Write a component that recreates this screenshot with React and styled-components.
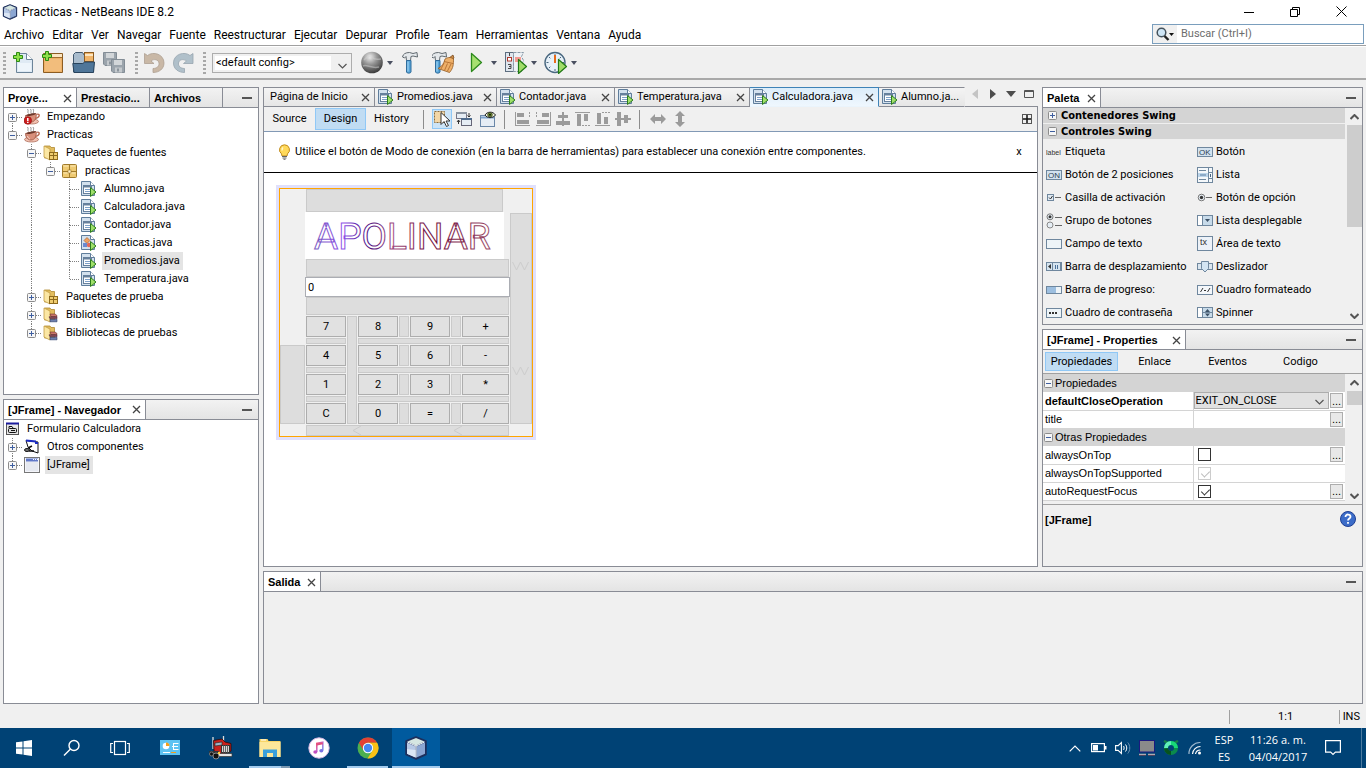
import React from "react";
import styled, { createGlobalStyle, css } from "styled-components";

const ui = `Roboto, "Open Sans", sans-serif`;
const uiBold = `"DejaVu Sans Condensed", "DejaVu Sans", sans-serif`;
const segoe = `"Open Sans", "Noto Sans", sans-serif`;
const arial = `"Liberation Sans", Arial, sans-serif`;
const line = "#898c95";

const GlobalStyle = createGlobalStyle`
  * { box-sizing: border-box; }
  body { margin: 0; background: #f0f0f0; color: #000; font: 11px/14px ${ui}; }
  button, input, select { font: inherit; color: inherit; margin: 0; padding: 0; }
  button { background: none; border: 0; display: inline-flex; align-items: center; justify-content: center; }
  ul { list-style: none; margin: 0; padding: 0; }
  svg { display: block; flex: none; }
`;

/* ---------- page frame ---------- */
const Page = styled.div`
  min-height: 100vh;
  display: flex;
  flex-direction: column;
`;
const TitleBar = styled.header`
  height: 23px;
  background: #fff;
  display: flex;
  align-items: center;
  gap: 4px;
  padding: 0 2px;
  font: 12px/16px ${ui};
`;
const Title = styled.h1`
  font: inherit;
  margin: 0;
  flex: 1;
`;
const WindowButtons = styled.div`
  display: flex;
`;
const WindowButton = styled.button`
  width: 46px;
  height: 20px;
`;
const MenuBar = styled.nav`
  height: 23px;
  background: #fff;
  border-bottom: 1px solid #a0a0a0;
  display: flex;
  align-items: center;
  justify-content: space-between;
  padding: 0 2px 0 4px;
`;
const MenuList = styled.ul`
  display: flex;
  gap: 8px;
  padding-top: 2px;
  font: 12px/16px ${ui};
`;
const MenuItem = styled.button`
  white-space: nowrap;
`;
const SearchBox = styled.label`
  width: 212px;
  height: 20px;
  display: flex;
  align-items: center;
  border: 1px solid #7a9ebd;
  background: #fff;
`;
const SearchGlyph = styled.span`
  width: 24px;
  height: 18px;
  padding: 2px 3px;
  background: #f0f0f0;
`;
const SearchInput = styled.input`
  flex: 1;
  min-width: 0;
  border: 0;
  outline: 0;
  padding: 0 4px;
  background: none;
  &::placeholder { color: #6d6d6d; opacity: 1; }
`;
const ToolBar = styled.div`
  height: 34px;
  border-top: 1px solid #fff;
  border-bottom: 2px solid #a9a9a9;
  display: flex;
  align-items: center;
  padding-left: 3px;
`;
const Grip = styled.i`
  width: 3px;
  height: 22px;
  margin: 0 6px 0 ${(p) => (p.$first ? 0 : 9)}px;
  background: repeating-linear-gradient(#a8a8a8 0 2px, transparent 2px 4px);
`;
const ToolGroup = styled.div`
  display: flex;
  align-items: center;
  gap: ${(p) => p.$gap || 6}px;
`;
const SplitButton = styled.div`
  display: flex;
`;
const ToolButton = styled.button`
  width: ${(p) => p.$w || 24}px;
  height: 26px;
`;
const SplitArrow = styled.button`
  width: 12px;
  height: 26px;
`;
const SelectWrap = styled.span`
  position: relative;
  display: block;
  width: ${(p) => p.$w || "100%"};
  height: ${(p) => p.$h}px;
  margin-right: ${(p) => p.$mr || 0}px;
  & > svg { position: absolute; right: 5px; bottom: 4px; pointer-events: none; }
`;
const Select = styled.select`
  appearance: none;
  display: block;
  width: 100%;
  height: 100%;
  padding-left: ${(p) => (p.$flat ? 1 : 3)}px;
  border: 1px solid #adadad;
  border-radius: 0;
  font-family: ${ui};
  background: ${(p) => (p.$flat ? "#e1e1e1" : "linear-gradient(90deg, #fff, #fff) 2px 2px / calc(100% - 22px) calc(100% - 4px) no-repeat #f0f0f0")};
`;

/* ---------- docked panels ---------- */
const Workspace = styled.main`
  flex: 1;
  display: flex;
  gap: 4px;
  padding: 7px 3px 0;
`;
const Column = styled.div`
  display: flex;
  flex-direction: column;
  gap: 4px;
  ${(p) => (p.$w ? css`width: ${p.$w}px; flex: none;` : css`flex: 1; min-width: 0;`)}
`;
const Row = styled.div`
  display: flex;
  gap: 4px;
  flex: 1;
`;
const Panel = styled.section`
  flex: ${(p) => p.$flex || "1 1 0"};
  display: flex;
  flex-direction: column;
  min-height: 0;
  border: 1px solid ${line};
  background: ${(p) => (p.$white ? "#fff" : "#f0f0f0")};
`;
const PanelHead = styled.div`
  height: 20px;
  display: flex;
  border-bottom: 1px solid ${line};
  background: linear-gradient(#f2f2f2, #e4e4e4);
`;
const PanelTab = styled.button`
  width: ${(p) => p.$w}px;
  height: 19px;
  padding: 1px 4px 0;
  justify-content: space-between;
  white-space: nowrap;
  border-right: 1px solid ${line};
  font: bold 11px/14px ${arial};
  background: ${(p) => (p.$active ? "#fff" : "none")};
`;
const PanelMin = styled.button`
  margin-left: auto;
  width: 22px;
  height: 19px;
  padding-top: 1px;
`;

/* ---------- tree ---------- */
const Tree = styled.ul`
  flex: 1;
`;
const TreeRow = styled.li`
  height: 18px;
  display: flex;
  align-items: center;
  & > svg:last-of-type { margin: 0 5px 0 ${(p) => (p.$root ? 2 : 1)}px; }
`;
const TreeText = styled.span`
  line-height: 18px;
  padding: 0 3px 0 2px;
  white-space: nowrap;
  background: ${(p) => (p.$on ? "#e4e4e4" : "none")};
`;

/* ---------- editor ---------- */
const Editor = styled.section`
  flex: 1;
  min-width: 0;
  display: flex;
  flex-direction: column;
`;
const EditorTabs = styled.div`
  height: 20px;
  display: flex;
`;
const EditorTab = styled.button`
  width: ${(p) => p.$w}px;
  height: 20px;
  flex: none;
  justify-content: flex-start;
  gap: 3px;
  padding: 0 4px 0 ${(p) => (p.$plain ? 6 : 3)}px;
  white-space: nowrap;
  border: 1px solid ${line};
  border-width: 1px 1px 1px 0;
  background: linear-gradient(#f4f4f4, #e6e6e6);
  &:first-child { border-left-width: 1px; }
  &:last-of-type { border-right-color: transparent; }
  ${(p) => p.$active && css`
    border-color: #3f83b7 #3f83b7 #eaf4fc;
    background: linear-gradient(#dcedfa, #eff7fe);
  `}
  & > svg:last-child:not(:first-child) { margin-left: auto; }
`;
const TabTools = styled.div`
  flex: 1;
  display: flex;
  align-items: flex-start;
  justify-content: flex-end;
  border-bottom: 1px solid ${line};
`;
const TabTool = styled.button`
  width: 18px;
  height: 14px;
`;
const EditorBody = styled.div`
  flex: 1;
  display: flex;
  flex-direction: column;
  border: 1px solid ${line};
  border-top: 0;
  background: #fff;
`;
const EditorBar = styled.div`
  height: 25px;
  display: flex;
  align-items: center;
  border-bottom: 1px solid #8299b5;
  background: #f0f0f0;
`;
const ViewButton = styled.button`
  width: 51px;
  height: 22px;
  ${(p) => p.$active && css`
    background: #c0dcf3;
    border: 1px solid #90c8f6;
  `}
`;
const Divider = styled.i`
  width: 1px;
  height: 19px;
  background: #8c8c8c;
  margin: 0 8px 0 6px;
`;
const BarButton = styled.button`
  width: 20px;
  height: 20px;
  margin-right: ${(p) => p.$mr || 0}px;
  ${(p) => p.$end && css`margin-left: auto;`}
  ${(p) => p.$active && css`
    background: #cce4f7;
    border: 1px solid #90c8f6;
  `}
`;
const Hint = styled.div`
  height: 41px;
  display: flex;
  align-items: center;
  gap: 4px;
  padding: 0 12px 0 14px;
  border-bottom: 1px solid #000;
`;
const HintText = styled.p`
  margin: 0;
  flex: 1;
`;
const HintClose = styled.button`
  width: 12px;
`;
const Canvas = styled.div`
  flex: 1;
  padding: 12px;
`;

/* ---------- calculator form ---------- */
const FormShadow = styled.div`
  width: 260px;
  padding: 3px;
  background: #e0e0fc;
`;
const FormFrame = styled.form`
  display: flex;
  border: 1px solid #ffa500;
  background: #f0f0f0;
`;
const FormSide = styled.div`
  width: ${(p) => p.$w}px;
  padding: ${(p) => p.$top}px 0 12px;
  display: flex;
`;
const Spacer = styled.div`
  flex: ${(p) => (p.$h ? "none" : 1)};
  height: ${(p) => (p.$h ? p.$h + "px" : "auto")};
  margin: ${(p) => p.$m || 0};
  grid-area: ${(p) => p.$area || "auto"};
  border: 1px solid #cacaca;
  background: #dddddd;
  display: flex;
  flex-direction: ${(p) => (p.$col ? "column" : "row")};
  align-items: center;
  justify-content: space-around;
`;
const FormCenter = styled.div`
  flex: 1;
`;
const Banner = styled.div`
  width: 199px;
  height: 47px;
  background: #fff;
`;
const Display = styled.input`
  display: block;
  width: 100%;
  height: 20px;
  padding: 0 2px;
  border: 1px solid #abadb3;
  border-radius: 0;
  background: #fff;
`;
const Keys = styled.div`
  display: grid;
  grid-template-columns: 40px 10px 40px 10px 40px 10px 47px;
  grid-template-rows: 21px 6px 21px 6px 21px 6px 21px;
  gap: 1px;
  margin: 1px;
`;
const Key = styled.button`
  grid-area: ${(p) => p.$area};
  border: 1px solid #adadad;
  background: #e1e1e1;
`;

/* ---------- palette ---------- */
const Scroller = styled.div`
  flex: 1;
  display: flex;
  min-height: 0;
`;
const ScrollContent = styled.div`
  flex: 1;
  min-width: 0;
`;
const ScrollBar = styled.div`
  width: 16px;
  display: flex;
  flex-direction: column;
  align-items: center;
  margin-left: 1px;
`;
const ScrollButton = styled.button`
  width: 16px;
  height: 17px;
`;
const ScrollTrack = styled.div`
  flex: 1;
  width: 15px;
`;
const ScrollThumb = styled.div`
  height: ${(p) => p.$h};
  background: #cdcdcd;
`;
const PaletteHead = styled.button`
  width: 100%;
  height: 16px;
  justify-content: flex-start;
  gap: 4px;
  padding-left: 5px;
  font: bold 11px/14px ${uiBold};
  background: #d4d4d4;
  border-bottom: 1px solid #efefef;
`;
const PaletteGrid = styled.ul`
  display: grid;
  grid-template-columns: 1fr 1fr;
  grid-auto-rows: 23px;
`;
const PaletteItem = styled.li`
  display: flex;
  align-items: center;
  gap: 3px;
  padding-left: 3px;
  white-space: nowrap;
`;

/* ---------- properties ---------- */
const PropTabs = styled.div`
  display: flex;
  padding: 2px;
  height: 24px;
  border-bottom: 1px solid #a0a0a0;
`;
const PropTab = styled.button`
  flex: 0 1 73px;
  height: 19px;
  ${(p) => p.$active && css`
    background: #c0dcf3;
    border: 1px solid #90c8f6;
  `}
`;
const PropTable = styled.table`
  width: 100%;
  table-layout: fixed;
  border-collapse: collapse;
  background: #fff;
  font: 11px/14px ${arial};
  & td, & th { height: 18px; padding: 0 2px; border-bottom: 1px solid #d4d4d4; text-align: left; }
  & th { font-weight: normal; border-right: 1px solid #d4d4d4; white-space: nowrap; }
  & td + td { padding: 0 1px; }
`;
const NameCol = styled.col`
  width: 150px;
`;
const MoreCol = styled.col`
  width: 16px;
`;
const CategoryRow = styled.tr`
  background: #d4d4d4;
  & > th { border: 0; padding: 0 1px; }
`;
const CategoryLabel = styled.span`
  display: flex;
  align-items: center;
  gap: 2px;
`;
const PropValue = styled.td`
  ${(p) => p.$flush && css`&&& { padding: 0; }`}
`;
const More = styled.button`
  width: 13px;
  height: 15px;
  display: flex;
  border: 1px solid #adadad;
  background: #e8e8e8;
`;
const Check = styled.input`
  appearance: none;
  display: block;
  position: relative;
  width: 13px;
  height: 13px;
  margin-left: 2px;
  border: 1px solid #333;
  background: #fff;
  &:checked::after {
    content: "";
    position: absolute;
    left: 4px;
    top: 1px;
    width: 4px;
    height: 7px;
    border: solid #333;
    border-width: 0 1px 1px 0;
    transform: rotate(45deg);
  }
  &:disabled { border-color: #ccc; }
  &:disabled::after { border-color: #bbb; }
`;
const Description = styled.div`
  height: 62px;
  display: flex;
  justify-content: space-between;
  padding: 6px 6px 0 2px;
  border-top: 1px solid #a0a0a0;
  font: bold 11px/18px ${arial};
`;
const HelpButton = styled.button`
  width: 16px;
  height: 16px;
`;

/* ---------- status and task bars ---------- */
const StatusBar = styled.footer`
  height: 24px;
  display: flex;
  align-items: center;
  justify-content: flex-end;
  padding: 2px 6px 0 0;
`;
const StatusCell = styled.span`
  width: ${(p) => (p.$w ? p.$w + "px" : "auto")};
  text-align: center;
  border-left: 1px solid #a0a0a0;
  padding-left: 3px;
`;
const TaskBar = styled.footer`
  height: 40px;
  background: #004275;
  color: #fff;
  display: flex;
  justify-content: space-between;
  font: 11px/17px ${segoe};
`;
const TaskGroup = styled.div`
  display: flex;
`;
const TaskButton = styled.button`
  position: relative;
  width: ${(p) => p.$w}px;
  height: 40px;
  background: ${(p) => (p.$active ? "#005a9e" : "none")};
  &::after {
    content: "";
    display: ${(p) => (p.$mark ? "block" : "none")};
    position: absolute;
    left: ${(p) => (p.$active ? 0 : 4)}px;
    right: ${(p) => (p.$active ? 0 : 4)}px;
    bottom: 0;
    height: 2px;
    background: ${(p) => (p.$mark === "many" ? "linear-gradient(90deg, #a3cbee 78%, #7b98b1 78%)" : "#a3cbee")};
  }
`;
const TrayButton = styled.button`
  width: ${(p) => p.$w || 24}px;
  height: 40px;
`;
const TrayText = styled.div`
  width: ${(p) => p.$w}px;
  padding-top: 3px;
  text-align: center;
`;
const ShowDesktop = styled.i`
  width: 5px;
  margin-left: 10px;
  border-left: 1px solid #4c7ba0;
`;

/* ---------- icons ---------- */
const Svg = ({ w = 16, h = 16, children, ...rest }) => (
  <svg width={w} height={h} viewBox={`0 0 ${w} ${h}`} fill="none" aria-hidden="true" {...rest}>{children}</svg>
);
const Close = () => <Svg w={9} h={9}><path d="M1 1l7 7M8 1L1 8" stroke="#444" strokeWidth="1.300" /></Svg>;
const Minus = () => <Svg w={10} h={2}><path d="M0 1h10" stroke="#555" strokeWidth="2" /></Svg>;
const Caret = () => <Svg w={6} h={4}><path d="M0 0h6L3 4z" fill="#4a5060" /></Svg>;
const Chevron = ({ up, c = "#555", s = 1.2 }) => (
  <Svg w={9} h={6}><path d={up ? "M.5 5l4-4 4 4" : "M.5 1l4 4 4-4"} stroke={c} strokeWidth={s} /></Svg>
);
const Cube = ({ s = 16 }) => (
  <svg width={s} height={s} viewBox="0 0 24 24" aria-hidden="true">
    <path d="M12 1l10 4v13.500L12 23 2 18.500V5z" fill="#1d2f5c" stroke="#1d2f5c" strokeWidth="1.500" strokeLinejoin="round" />
    <path d="M12 2l8.500 3.500L12 9.500 3.500 5.500z" fill="#d5e6e2" />
    <path d="M3 6.500l8.500 4v11L3 17.800z" fill="#b5c8e6" />
    <path d="M21 6.500l-8.500 4v11l8.500-3.700z" fill="#8ba6d2" />
    <path d="M3 13l8.500 1v7.500L3 17.800z" fill="#dbe6f5" />
    <path d="M12 9.500v12M3.500 6l8.500 4 8.500-4" stroke="#f2f8fb" fill="none" />
  </svg>
);
const Box = ({ x = 0, y = 0, plus }) => (
  <g>
    <rect x={x + 0.5} y={y + 0.5} width="8" height="8" rx="1" fill="#f6f6f6" stroke="#8c8c8c" />
    <path d={`M${x + 2} ${y + 4.5}h5`} stroke="#3f5fa0" />
    {plus && <path d={`M${x + 4.5} ${y + 2}v5`} stroke="#3f5fa0" />}
  </g>
);
const Expander = ({ plus }) => <Svg w={9} h={9}><Box plus={plus} /></Svg>;

/* dotted connector lines of one 19px wide tree level */
const Guide = ({ kind }) => {
  const up = kind === "line" || kind === "tee" || kind === "end" || kind.includes("u");
  const down = kind === "line" || kind === "tee" || (kind.includes("d") && kind !== "end");
  const open = kind.includes("+") || kind.includes("-");
  const arm = open || kind === "tee" || kind === "end";
  const shown = kind !== "blank";
  return (
    <Svg w={19} h={18}>
      {shown && up && <path d="M8.500 0v9" stroke="#808080" strokeDasharray="1 1" />}
      {shown && down && <path d="M8.500 9v9" stroke="#808080" strokeDasharray="1 1" />}
      {arm && <path d="M9 9.500h10" stroke="#808080" strokeDasharray="1 1" />}
      {open && <Box x={4} y={5} plus={kind.includes("+")} />}
    </Svg>
  );
};

const Cup = ({ bad }) => (
  <Svg>
    <path d="M4.500 4.500C3 3 5 2 3.500 0M7.500 4.500C6 3 8 2 6.500 0M10 4.500C8.500 3 10.500 2 9 0" stroke="#777" strokeWidth=".8" />
    <ellipse cx="7.500" cy="12.500" rx="7" ry="2.500" fill="#f0c0b0" stroke="#a5604e" strokeWidth=".7" />
    <path d="M1.500 6.500L12 4.500c1 4-1 8.500-5 8.500-3.500 0-5.500-3-5.500-6.500z" fill="#d88f7a" stroke="#9c5543" strokeWidth=".8" />
    <path d="M1.800 6.600C3 5 10 3.500 11.900 4.600c-1 1.900-7.900 3.200-10.100 2z" fill="#6e3a2c" />
    <path d="M12.300 5.500c4-1.500 4.200 2.500-1 4.200" stroke="#b86a55" strokeWidth="1.300" />
    <path d="M3.500 9c.3 1.500 1.300 2.500 2.500 3" stroke="#f7d8cc" />
    {bad && <g><circle cx="3.800" cy="11.500" r="3.800" fill="#cc1f1f" stroke="#8e0e0e" strokeWidth=".6" /><path d="M3.800 9v3M3.800 12.800V14" stroke="#fff" strokeWidth="1.500" /></g>}
  </Svg>
);
const Folder = ({ kind }) => (
  <Svg>
    <path d="M1.500 1H7l1 1.500h3.500V13h-10z" fill="#e2bd5e" stroke="#b08a33" strokeWidth=".8" />
    <path d="M1 1l6 3v11l-6-3z" fill="#fbe7a4" stroke="#c39d45" strokeWidth=".8" />
    {kind === "pkg"
      ? <g><rect x="6.500" y="7.500" width="8" height="7" fill="#f0cd70" stroke="#8e6a1d" /><path d="M6.500 10.500h8M10.500 7.500v7" stroke="#8e6a1d" /></g>
      : <g><path d="M7 7h5l2 1.500v1H8z" fill="#c9766c" stroke="#6d2f2a" strokeWidth=".6" /><path d="M6 9.800h8v2H7z" fill="#8b4c5c" stroke="#54283a" strokeWidth=".6" /><path d="M7 12.300h7v2.500H7z" fill="#6d7fae" stroke="#2c3d66" strokeWidth=".6" /></g>}
  </Svg>
);
const Pkg = () => (
  <Svg>
    <rect x=".5" y="1.500" width="14" height="13" rx="1" fill="#efca72" stroke="#a07b2c" />
    <path d="M.5 8.500h14M7.500 1.500v13" stroke="#a07b2c" /><path d="M1.500 3h5M8.500 3h5M1.500 10h5M8.500 10h5" stroke="#fbe9b8" />
    <rect x="6" y="7" width="3" height="3" fill="#fff2cb" stroke="#a07b2c" strokeWidth=".6" />
  </Svg>
);
const JavaFile = ({ cls }) => (
  <Svg>
    <path d="M.5.500h9l4 4v10H.5z" fill="#d3e1ee" stroke="#5f7d9b" />
    <path d="M9.500.500v4h4" fill="#fff" stroke="#5f7d9b" />
    {cls
      ? <g><path d="M6 2.500l3 3-3 3-3-3z" fill="#f0a060" stroke="#a05018" strokeWidth=".6" /><rect x="2" y="8" width="4" height="4" fill="#6a8ad0" /><circle cx="8" cy="10" r="2.200" fill="#e36a5a" /></g>
      : <g><rect x="2.500" y="4.500" width="8" height="8" fill="#fff" stroke="#66809c" /><path d="M3 5.500h7" stroke="#66809c" strokeWidth="2" /><path d="M4 8.500h5M4 10.500h5" stroke="#7da0c8" /></g>}
    <path d="M9.500 6.500l5.500 4.500-5.500 4.500z" fill="#9fe06a" stroke="#2c7d1c" />
  </Svg>
);
const FormIcon = () => (
  <Svg w={14} h={14}><rect x=".5" y="1.500" width="12" height="11" fill="#e8e8e8" stroke="#555" /><path d="M0 1.500h13" stroke="#1b1b9c" strokeWidth="2" /><path d="M3 6V4.500h3L7 6M2 8.500h9" stroke="#111" /><rect x="2.500" y="6.500" width="8" height="4" rx="1" fill="#ddd" stroke="#111" /><path d="M5 8.500h4" stroke="#111" /></Svg>
);
const OtherIcon = () => (
  <Svg><path d="M2 1.500l12 1.500v11L8 12 4 8z" fill="#fff" stroke="#111" /><path d="M2 1.500l10 1" stroke="#1b2bc0" strokeWidth="2" /><path d="M11 4h3" stroke="#1b2bc0" strokeWidth="2" /><ellipse cx="3" cy="11" rx="2.500" ry="1.500" fill="#777" stroke="#111" /><path d="M4 9l4-2M5 12h5" stroke="#111" strokeWidth="1.500" /></Svg>
);
const FrameIcon = () => (
  <Svg><rect x=".5" y=".5" width="15" height="15" fill="#f4f5fa" stroke="#777" /><path d="M2 3h12" stroke="#6078c8" strokeWidth="3" /><path d="M9 2.500h1M11 2.500h1M13 2.500h1" stroke="#fff" /><path d="M2 5h12v9H2z" fill="#e6e9f0" /></Svg>
);
const Plus = () => <path d="M3.500.500h3v3h3v3h-3v3h-3v-3h-3v-3h3z" fill="#8ee04a" stroke="#2c8a12" />;
const NewFile = () => (
  <Svg w={24} h={24}><path d="M4.500 2.500h10l6 6v13h-16z" fill="#dfeaf4" stroke="#6c8499" /><path d="M14.500 2.500v6h6" fill="#fff" stroke="#6c8499" /><path d="M6 12h13v8H6z" fill="#eef5fb" /><g transform="translate(1 1)"><Plus /></g></Svg>
);
const NewProject = () => (
  <Svg w={24} h={24}><path d="M1.500 2.500h19v19h-19z" fill="#eeb267" stroke="#8c5c22" /><path d="M2 3h18v3H2z" fill="#fbe6c2" /><path d="M2 6.500h18" stroke="#a06e30" /><path d="M3 8h16v12H3z" fill="#f2bd7c" /><Plus /></Svg>
);
const OpenProject = () => (
  <Svg w={24} h={24}><path d="M1.500 21V3.500l2-2h7l2 3h9V21z" fill="#a9bccd" stroke="#41586e" /><rect x="12.500" y="1.500" width="9" height="9" fill="#f0b469" stroke="#8c5c22" /><path d="M13 4h8" stroke="#fbe6c2" strokeWidth="2" /><path d="M.8 12.500h10l2-1.500H22.500L21.500 21.500H2z" fill="#4f7699" stroke="#28435c" /></Svg>
);
const Disk = ({ x, y }) => <g transform={`translate(${x} ${y})`}><path d="M.5.500h13v13H2L.5 12z" fill="#9ba4ac" stroke="#838d96" /><path d="M3 1h8v5H3z" fill="#d2d6d9" /><path d="M4 8.500h7v5H4z" fill="#c4c9cd" /><path d="M6 9.500h2v3H6z" fill="#8c959d" /></g>;
const SaveAll = () => <Svg w={24} h={24}><Disk x={1} y={1} /><Disk x={9} y={8} /></Svg>;
const Undo = () => <Svg w={22} h={24}><path d="M.5 2.500l3 2C9 0 20 3 20 12c0 6-5 9.500-11 9.500v-4c4 0 6.500-2.500 6-5.500-.5-3.500-5-4.500-8-2l3 2.500H.5z" fill="#c9b8a6" stroke="#ad9f92" strokeWidth=".8" /></Svg>;
const Redo = () => <Svg w={22} h={24}><path d="M21 2.500l-3 2C12.500 0 1.500 3 1.500 12c0 6 5 9.500 11 9.500v-4c-4 0-6.500-2.500-6-5.500.5-3.500 5-4.500 8-2l-3 2.500H21z" fill="#b0c0ca" stroke="#97a5ae" strokeWidth=".8" /></Svg>;
const Globe = () => (
  <Svg w={24} h={24}><defs><radialGradient id="globe" cx=".4" cy=".25" r=".8"><stop offset="0" stopColor="#eee" /><stop offset=".4" stopColor="#999" /><stop offset="1" stopColor="#333" /></radialGradient></defs><circle cx="12" cy="11.500" r="10.800" fill="url(#globe)" /><path d="M4 9c3-4 7-4 9-2s5 1 8 1M3 15c4-2 8 3 16 1" stroke="#d0d0d0" strokeWidth="1.500" opacity=".5" /></Svg>
);
const HammerShape = () => <g><path d="M2.500 6c.5-3 3-4.500 7-4.500l3.500 1 4-1 .5 4.500-4.500-1-2 .5-.5 4H6.500L6 5.500 4.500 7z" fill="#e4e8eb" stroke="#626a70" /><path d="M6.500 9.500h4.500V21c0 1.500-4.500 1.500-4.500 0z" fill="#56a4d8" stroke="#2f6c9c" /><path d="M8 10.500v10" stroke="#a8d8f5" /></g>;
const Hammer = () => <Svg w={28} h={24}><HammerShape /></Svg>;
const Clean = () => <Svg w={28} h={24}><g transform="translate(-3 0)"><HammerShape /></g><path d="M17 7l4-3 1 3-1 1z" fill="#c98a4a" stroke="#7a4a1c" strokeWidth=".8" /><path d="M13 8c3-2 6-2 8.500 0 0 5 0 9-4 13.500L6 17.500c4-2 6-5 7-9.500z" fill="#eeb069" stroke="#935a22" strokeWidth=".8" /><path d="M12 10.500l9 2M12 12l-3 6M15.500 12.500l-3 7M19 13l-3.500 7" stroke="#a9642a" strokeWidth=".8" /></Svg>;
const Play = () => <Svg w={24} h={24}><path d="M7.500 2.500v18l10-9z" fill="#a6e070" stroke="#2c8a1c" strokeWidth="1.300" strokeLinejoin="round" /></Svg>;
const SmallPlay = () => <path d="M14.500 8.500v14l8-7z" fill="#a0dc68" stroke="#217a16" strokeWidth="1.200" strokeLinejoin="round" />;
const Debug = () => <Svg w={24} h={24}><rect x="1.500" y="1.500" width="8" height="19" fill="#dfe6ee" stroke="#5d6e80" /><path d="M9.500 1.500h10l-2 4 2 4-2 5v6h-8z" fill="#edf1f5" stroke="#8b9aa8" strokeDasharray="3 1" /><rect x="3.500" y="6.500" width="4" height="3.500" fill="#fff" stroke="#b03a2e" /><path d="M5.500 2v3M4 13.500h3v2H5M7 15.500v2H4" stroke="#4a4a4a" /><rect x="11" y="6" width="6" height="5" fill="#f49a92" /><SmallPlay /></Svg>;
const ProfileIcon = () => <Svg w={24} h={24}><circle cx="11" cy="11.500" r="10" fill="#e6f0f8" stroke="#4a6880" strokeWidth="1.400" /><path d="M11 3v2M11 18v2M2.500 11.500h2M18 11.500h2M5 6l1.300 1.300M17 6l-1.300 1.300M5 17l1.300-1.300" stroke="#4a6880" /><path d="M11 4v8" stroke="#e86a1a" strokeWidth="2" /><SmallPlay /></Svg>;
const Magnifier = () => <Svg w={20} h={16}><circle cx="5.500" cy="5.500" r="4.300" fill="#cfe6f6" stroke="#45525c" strokeWidth="1.500" /><path d="M8.500 9l4 4" stroke="#222" strokeWidth="2.400" /><path d="M13 6h5l-2.500 3z" fill="#111" /></Svg>;
const Bulb = () => <Svg w={13} h={16}><path d="M6.500.800a5 5 0 0 1 3 9L9 12H4l-.5-2.200a5 5 0 0 1 3-9z" fill="#ffd95a" stroke="#c08a1c" /><path d="M5 3.500c-1 1-1 2-.8 3" stroke="#fff6cc" strokeWidth="1.400" /><path d="M4 12.500h5M4.500 14h4M5.500 15.300h2" stroke="#666" /></Svg>;
const SelectMode = () => <Svg w={18} h={18}><rect x="1.500" y="1.500" width="10" height="11" fill="#f2d6a6" stroke="#8a6a3a" strokeDasharray="2 1" /><path d="M8 2.500v12l3-3 2.500 5 2-1-2.500-4.500h4z" fill="#fff" stroke="#333" /></Svg>;
const Connect = () => <Svg><rect x=".5" y="1.500" width="10" height="6" fill="#e6edf4" stroke="#778" /><path d="M0 2h11" stroke="#8a93a0" strokeWidth="2" /><rect x="5.500" y="7.500" width="10" height="7" fill="#e6edf4" stroke="#667" /><path d="M5 8h11" stroke="#4f6b8c" strokeWidth="2" /><path d="M2.500 9v4M1 11l1.500-2L4 11M13 6V2M11.500 4.500l1.500 1.500 1.500-1.500" stroke="#333" /></Svg>;
const Preview = () => <Svg><rect x=".5" y="4.500" width="14" height="11" fill="#e6edf5" stroke="#6a87a8" /><path d="M1 6.500h13" stroke="#7ea3cc" strokeWidth="2" /><path d="M5 4c2-3.500 8-4 10.500 0-2.500 3.500-8.500 3.500-10.500 0z" fill="#f0f5d8" stroke="#222" /><circle cx="10" cy="3.800" r="2.300" fill="#7aa02c" stroke="#222" strokeWidth=".7" /><circle cx="10" cy="3.800" r="1" fill="#111" /></Svg>;
const g = "#9b9b9b";
const alignArt = [
  <path key="a" d="M0 1h1v14H0zM2 2h7v4H2zM2 9h12v4H2zM14 1h1v2h-1zM14 4h1v2h-1zM0 14h15v1H0z" fill={g} />,
  <path key="b" d="M15 1h1v14h-1zM7 2h7v4H7zM2 9h12v4H2zM1 1h1v2H1zM1 4h1v2H1zM1 14h15v1H1z" fill={g} />,
  <path key="c" d="M7 1h2v14H7zM3 4h10v3H3zM1 10h14v4H1z" fill={g} />,
  <path key="d" d="M0 1h15v1H0zM2 3h4v12H2zM9 3h4v7H9zM7 14h2v1H7zM10 14h2v1h-2zM13 14h2v1h-2z" fill={g} />,
  <path key="e" d="M0 14h15v1H0zM2 2h4v11H2zM9 6h4v7H9zM7 1h2v1H7zM10 1h2v1h-2zM13 1h2v1h-2z" fill={g} />,
  <path key="f" d="M0 7h16v2H0zM2 1h4v14H2zM9 4h4v8H9z" fill={g} />,
];
const ResizeH = () => <Svg><path d="M0 8l5-5v3h6V3l5 5-5 5v-3H5v3z" fill={g} /></Svg>;
const ResizeV = () => <Svg><path d="M8 0l5 5h-3v6h3l-5 5-5-5h3V5H3z" fill={g} /></Svg>;

const blue = "#6f879e";
const PIcon = ({ k }) => (
  <Svg>
    {k === "label" && <text x="0" y="11" fontSize="7" fontFamily="Liberation Sans, sans-serif" fill="#333">label</text>}
    {(k === "OK" || k === "ON") && <g><rect x=".5" y="3.500" width="15" height="9" fill="#d3e2ef" stroke={blue} /><text x="2" y="11" fontSize="8" fontFamily="Liberation Sans, sans-serif" fill="#2c3f52">{k}</text></g>}
    {k === "list" && <g><rect x=".5" y=".5" width="15" height="15" fill="#f4f8fb" stroke={blue} /><path d="M2 3.500h7M2 12.500h7" stroke={blue} /><path d="M1 6h10v4H1z" fill="#bcd5ea" /><path d="M3 8h6" stroke="#5b7fa3" /><path d="M11.500 1v14M12 5.500h4M12 11.500h4" stroke={blue} /><path d="M13.500 7v3" stroke="#46627e" /></g>}
    {k === "check" && <g><rect x="1.500" y="4.500" width="6" height="6" fill="#dfe9f2" stroke={blue} /><path d="M3 7.500L4.500 9 6.500 6" stroke="#333" /><path d="M9 7.500h6" stroke="#666" /></g>}
    {k === "radio" && <g><circle cx="4.500" cy="7.500" r="3.300" fill="#e6eef5" stroke="#777" /><circle cx="4.500" cy="7.500" r="1.700" fill="#333" /><path d="M9 7.500h6" stroke="#666" /></g>}
    {k === "group" && <g><circle cx="4" cy="3.800" r="3" fill="#e6eef5" stroke="#777" /><circle cx="4" cy="3.800" r="1.500" fill="#333" /><circle cx="4" cy="12" r="3" fill="#e6eef5" stroke="#888" /><path d="M9 4.500h7M9 12.500h7" stroke="#666" /></g>}
    {k === "combo" && <g><rect x=".5" y="2.500" width="15" height="10" fill="#fff" stroke={blue} /><path d="M6 3h9v9H6z" fill="#c8dbea" /><path d="M5.500 3v9" stroke={blue} /><path d="M8 6h5l-2.500 3z" fill="#3c5166" /></g>}
    {k === "field" && <rect x=".5" y="3.500" width="15" height="9" fill="#edf4f8" stroke={blue} />}
    {k === "area" && <g><rect x=".5" y=".5" width="15" height="14" fill="#edf2f8" stroke={blue} /><text x="3" y="9" fontSize="9" fontFamily="Liberation Sans, sans-serif" fill="#333">tx</text></g>}
    {k === "scroll" && <g><rect x=".5" y="3.500" width="15" height="8" fill="#d6e4ef" stroke={blue} /><path d="M5 5v5L2 7.500z" fill="#333" /><path d="M6.500 4v8M14.500 4v8" stroke={blue} /><path d="M9.500 6v4M11.500 6v4" stroke="#4a7099" /></g>}
    {k === "slider" && <g><rect x=".5" y="4.500" width="15" height="6" fill="#dbe6ef" stroke={blue} /><path d="M4.500 2.500h7v7L8 13 4.500 9.500z" fill="#d3e4f2" stroke={blue} /></g>}
    {k === "bar" && <g><rect x=".5" y="4.500" width="15" height="7" fill="#eef4f8" stroke={blue} /><path d="M1 5h9v6H1z" fill="#9dbfe0" /></g>}
    {k === "fmt" && <g><rect x=".5" y="3.500" width="15" height="9" fill="#f4f7fa" stroke={blue} /><path d="M3.500 10L6 6M7 8.500h2M10.500 10L13 6" stroke="#333" /></g>}
    {k === "pass" && <g><rect x=".5" y="3.500" width="15" height="9" fill="#edf4f8" stroke={blue} /><path d="M3 8h9" stroke="#333" strokeWidth="2" strokeDasharray="2 1" /></g>}
    {k === "spin" && <g><rect x=".5" y="2.500" width="15" height="10" fill="#fff" stroke={blue} /><path d="M6 3h9v9H6z" fill="#c8dbea" /><path d="M5.500 3v9M6 7.500h9" stroke={blue} /><path d="M8 7l2.500-3L13 7zM8 8.500l2.500 3 2.500-3z" fill="#3c5166" /></g>}
  </Svg>
);

/* taskbar art */
const WinLogo = () => <Svg><path d="M0 2.300L6.500 1.400v6.100H0zM7.500 1.200L16 0v7.500H7.500zM0 8.500h6.500v6.100L0 13.700zM7.500 8.500H16V16l-8.500-1.200z" fill="#fff" /></Svg>;
const TaskSearch = () => <Svg w={18} h={18}><circle cx="11" cy="6.500" r="5" stroke="#fff" strokeWidth="1.400" /><path d="M7.500 10L1 16.500" stroke="#fff" strokeWidth="1.400" /></Svg>;
const TaskView = () => <Svg w={20} h={16}><rect x="4.500" y="1.500" width="11" height="13" stroke="#fff" strokeWidth="1.200" /><path d="M3 3.500H.7v9H3M17 3.500h2.300v9H17" stroke="#fff" strokeWidth="1.200" /></Svg>;
const ControlPanel = () => <Svg w={20} h={16}><rect width="20" height="15" fill="#5ec3f2" /><circle cx="6" cy="6" r="3.300" fill="#fff" /><path d="M6 6V2.500A3.500 3.500 0 0 1 9.500 6z" fill="#f2a01c" /><path d="M13.500 3.500h5M13.500 9.500h5M12 6.500h6M13.500 3v7M3 12.500h7" stroke="#fff" /><path d="M11 12.500h5" stroke="#f2a01c" /></Svg>;
const Truck = () => <Svg w={24} h={24}><path d="M4 1v12M14.500 0v6" stroke="#ddd" strokeWidth="1.300" /><path d="M4.500 4.500L13 3l3 3 6 1.500V15l-8 4-9-4z" fill="#c9201c" stroke="#2a0a0a" strokeWidth=".8" /><path d="M6 7l7-1v3l-7 1z" fill="#9fb4c8" stroke="#222" strokeWidth=".6" /><rect x="12.500" y="9.500" width="8" height="7" fill="#d8d8d8" stroke="#333" /><path d="M14.500 9.500v7M16.500 9.500v7M18.500 9.500v7" stroke="#666" /><path d="M9 17.500h14v3H9z" fill="#e8e8e8" stroke="#333" strokeWidth=".7" /><path d="M0 15h10v4H1z" fill="#333" /><circle cx="7" cy="20" r="3" fill="#111" stroke="#888" /><circle cx="2.500" cy="18" r="2" fill="#111" stroke="#777" /><circle cx="10" cy="17" r="1.200" fill="#ffd23c" /></Svg>;
const Explorer = () => <Svg w={22} h={20}><path d="M.5 1h8l1 2h12v16h-21z" fill="#f8d568" /><path d="M.5 4h21v15h-21z" fill="#fde79a" /><path d="M2 2h5" stroke="#fff" /><path d="M4 19v-7.500h14V19h-4v-4H8v4z" fill="#3aa0dc" /></Svg>;
const ITunes = () => <Svg w={22} h={22}><defs><linearGradient id="tune" x1="0" y1="0" x2="1" y2="1"><stop offset="0" stopColor="#f0506e" /><stop offset=".5" stopColor="#c46fd8" /><stop offset="1" stopColor="#6aa0e8" /></linearGradient></defs><circle cx="11" cy="11" r="10.200" fill="#fff" stroke="#d9b8e4" /><path d="M8.800 15V6.500l6-1.300v8.300" stroke="url(#tune)" strokeWidth="1.600" /><path d="M8.800 7.500l6-1.300" stroke="#e0507e" strokeWidth="2" /><ellipse cx="7.300" cy="15" rx="2" ry="1.700" fill="#c04fc0" /><ellipse cx="13.300" cy="13.700" rx="2" ry="1.700" fill="#7a6fe0" /></Svg>;
const Chrome = () => <Svg w={22} h={22}><circle cx="11" cy="11" r="10.500" fill="#4caf50" /><path d="M1.900 5.800A10.500 10.500 0 0 1 20.100 5.800H11a5.200 5.200 0 0 0-4.600 2.800L6.500 13.600z" fill="#e34133" /><path d="M20.100 5.800A10.500 10.500 0 0 1 10.500 21.500L15.500 13.600a5.200 5.200 0 0 0 0-5.200L11 5.800z" fill="#fbc116" /><circle cx="11" cy="11" r="5.200" fill="#fff" /><circle cx="11" cy="11" r="4.200" fill="#4688f1" /></Svg>;
const TrayUp = () => <Svg w={12} h={7}><path d="M.7 6.300L6 1l5.300 5.300" stroke="#fff" strokeWidth="1.200" /></Svg>;
const Battery = () => <Svg w={16} h={10}><rect x=".6" y=".6" width="12.800" height="8" stroke="#fff" strokeWidth="1.200" /><path d="M2 2h5v5.500H2zM14 3h1.500v3.500H14z" fill="#fff" /></Svg>;
const Volume = () => <Svg w={16} h={14}><path d="M.6 4.600h2.500L6.400 1.500v11L3.100 9.400H.6z" stroke="#fff" strokeWidth="1.100" /><path d="M8.500 5c.8 1 .8 3 0 4M10.500 3.500c1.700 2 1.700 5 0 7" stroke="#fff" /><path d="M12.800 1.500c2.600 3 2.600 8 0 11" stroke="#6b93b5" /></Svg>;
const Monitor = () => <Svg><rect x=".5" y=".5" width="15" height="11.500" fill="#8a8a8a" stroke="#1a1a80" /><path d="M0 14.500h7M9 14.500h7" stroke="#b0a8b0" strokeWidth="1.500" /><path d="M0 15.700h7M9 15.700h7" stroke="#6a2a3a" strokeWidth=".6" /></Svg>;
const Ring = () => <Svg><path d="M1 1l4 2M15 1l-4 2" stroke="#17804a" strokeWidth="2.500" /><circle cx="8" cy="8" r="5" stroke="#0b8a4c" strokeWidth="4" /><path d="M3 8a5 5 0 0 1 5-5" stroke="#5ff0b8" strokeWidth="4" /><path d="M8 3a5 5 0 0 1 5 5" stroke="#18d878" strokeWidth="4" /><path d="M3 8.500A5 5 0 0 0 8 13" stroke="#07521f" strokeWidth="4" /></Svg>;
const Wifi = () => <Svg w={14} h={14}><circle cx="11.500" cy="12" r="1.500" fill="#fff" /><path d="M7.500 13a5 5 0 0 1 5-4M4.500 13a8 8 0 0 1 8-7.500" stroke="#fff" strokeWidth="1.200" /><path d="M1 13A11 11 0 0 1 12.500 1.500" stroke="#9db8ce" strokeWidth="1.200" /></Svg>;
const Notice = () => <Svg w={16} h={16}><path d="M.6.600h14.800v11.500h-5L8 14.500l-2.400-2.400h-5z" stroke="#fff" strokeWidth="1.200" /></Svg>;

/* ---------- data ---------- */
const menus = ["Archivo", "Editar", "Ver", "Navegar", "Fuente", "Reestructurar", "Ejecutar", "Depurar", "Profile", "Team", "Herramientas", "Ventana", "Ayuda"];
const project = [
  [["+d"], <Cup bad />, "Empezando"],
  [["-u"], <Cup />, "Practicas"],
  [["blank", "-ud"], <Folder kind="pkg" />, "Paquetes de fuentes"],
  [["blank", "line", "-u"], <Pkg />, "practicas"],
  [["blank", "line", "blank", "tee"], <JavaFile />, "Alumno.java"],
  [["blank", "line", "blank", "tee"], <JavaFile />, "Calculadora.java"],
  [["blank", "line", "blank", "tee"], <JavaFile />, "Contador.java"],
  [["blank", "line", "blank", "tee"], <JavaFile cls />, "Practicas.java"],
  [["blank", "line", "blank", "tee"], <JavaFile />, "Promedios.java", true],
  [["blank", "line", "blank", "end"], <JavaFile />, "Temperatura.java"],
  [["blank", "+ud"], <Folder kind="pkg" />, "Paquetes de prueba"],
  [["blank", "+ud"], <Folder kind="lib" />, "Bibliotecas"],
  [["blank", "+u"], <Folder kind="lib" />, "Bibliotecas de pruebas"],
];
const navigator = [
  [[], <FormIcon />, "Formulario Calculadora"],
  [["+ud"], <OtherIcon />, "Otros componentes"],
  [["+u"], <FrameIcon />, "[JFrame]", true],
];
const editorTabs = [
  ["Página de Inicio", 112, true],
  ["Promedios.java", 122],
  ["Contador.java", 118],
  ["Temperatura.java", 135],
  ["Calculadora.java", 129],
  ["Alumno.ja...", 86],
];
const palette = [
  ["label", "Etiqueta"], ["OK", "Botón"],
  ["ON", "Botón de 2 posiciones"], ["list", "Lista"],
  ["check", "Casilla de activación"], ["radio", "Botón de opción"],
  ["group", "Grupo de botones"], ["combo", "Lista desplegable"],
  ["field", "Campo de texto"], ["area", "Área de texto"],
  ["scroll", "Barra de desplazamiento"], ["slider", "Deslizador"],
  ["bar", "Barra de progreso:"], ["fmt", "Cuadro formateado"],
  ["pass", "Cuadro de contraseña"], ["spin", "Spinner"],
];
const keys = [["7", "8", "9", "+"], ["4", "5", "6", "-"], ["1", "2", "3", "*"], ["C", "0", "=", "/"]];

/* ---------- parts ---------- */
const TreeView = ({ label, rows }) => (
  <Tree aria-label={label}>
    {rows.map(([guides, icon, text, on]) => (
      <TreeRow key={text} $root={!guides.length}>
        {guides.map((k, i) => <Guide key={i} kind={k} />)}
        {icon}
        <TreeText $on={on}>{text}</TreeText>
      </TreeRow>
    ))}
  </Tree>
);
const PanelTop = ({ tabs, w }) => (
  <PanelHead>
    {tabs.map((t, i) => (
      <PanelTab key={t} $active={i === 0} $w={w}>{t}{i === 0 && <Close />}</PanelTab>
    ))}
    <PanelMin aria-label="Minimizar"><Minus /></PanelMin>
  </PanelHead>
);
const Scroll = ({ thumb }) => (
  <ScrollBar>
    <ScrollButton aria-label="Subir"><Chevron up s={2} /></ScrollButton>
    <ScrollTrack><ScrollThumb $h={thumb} /></ScrollTrack>
    <ScrollButton aria-label="Bajar"><Chevron s={2} /></ScrollButton>
  </ScrollBar>
);
const Category = ({ children }) => (
  <CategoryRow><th colSpan={3}><CategoryLabel><Expander />{children}</CategoryLabel></th></CategoryRow>
);
const Property = ({ name, bold, more = true, flush, children }) => (
  <tr>
    <th scope="row">{bold ? <b>{name}</b> : name}</th>
    <PropValue $flush={flush}>{children}</PropValue>
    <td>{more && <More aria-label={`Editar ${name}`}>...</More>}</td>
  </tr>
);

const Calculator = () => (
  <FormShadow>
    <FormFrame onSubmit={(e) => e.preventDefault()}>
      <FormSide $w={25} $top={156}><Spacer /></FormSide>
      <FormCenter>
        <Spacer $h={23} $m="0 7px 0 1px" />
        <Banner>
          <svg width="199" height="47" viewBox="0 0 199 47" role="img" aria-label="APOLINAR">
            <defs>
              <linearGradient id="ink" gradientUnits="userSpaceOnUse" x1="10" x2="186" y1="0" y2="0">
                <stop offset="0" stopColor="#7a5ac0" />
                <stop offset=".16" stopColor="#8f50e8" />
                <stop offset=".3" stopColor="#4a1080" />
                <stop offset=".45" stopColor="#a04a80" />
                <stop offset=".65" stopColor="#6a0a3a" />
                <stop offset="1" stopColor="#9a4a6a" />
              </linearGradient>
            </defs>
            <text x="9" y="37" fontFamily="Roboto, Liberation Sans, sans-serif" fontSize="37" fill="#fff" stroke="url(#ink)" strokeWidth="1">APOLINAR</text>
          </svg>
        </Banner>
        <Spacer $h={18} $m="0 1px" />
        <Display aria-label="Resultado" defaultValue="0" />
        <Spacer $h={18} $m="0 1px" />
        <Keys>
          <Spacer $area="1 / 2 / 8 / 3" />
          {keys.map((row, r) => row.map((k, c) => (
            <Key key={k + r} type="button" $area={`${r * 2 + 1} / ${c * 2 + 1}`}>{k}</Key>
          )))}
          {keys.map((row, r) => [4, 6].map((c) => <Spacer key={`${r}-${c}`} $area={`${r * 2 + 1} / ${c}`} />))}
          {[2, 4, 6].map((r) => (
            <React.Fragment key={r}>
              <Spacer $area={`${r} / 1`} />
              <Spacer $area={`${r} / 3 / ${r + 1} / 8`} />
            </React.Fragment>
          ))}
        </Keys>
        <Spacer $h={11} $m="0 1px">
          {[0, 1].map((i) => <Svg key={i} w={10} h={9}><path d="M9 0L1 4.500 9 9" stroke="#ccc" /></Svg>)}
        </Spacer>
      </FormCenter>
      <FormSide $w={22} $top={24}>
        <Spacer $col>
          {[0, 1].map((i) => <Svg key={i} w={18} h={10}><path d="M.500 1l4 8 4-8 4 8 4-8" stroke="#ccc" /></Svg>)}
        </Spacer>
      </FormSide>
    </FormFrame>
  </FormShadow>
);

export default function App() {
  return (
    <Page>
      <GlobalStyle />
      <TitleBar>
        <Cube />
        <Title>Practicas - NetBeans IDE 8.2</Title>
        <WindowButtons>
          <WindowButton aria-label="Minimizar"><Svg w={10} h={10}><path d="M0 5.500h10" stroke="#000" /></Svg></WindowButton>
          <WindowButton aria-label="Restaurar"><Svg w={10} h={10}><path d="M.5 2.500h7v7h-7zM2.500 2.500v-2h7v7h-2" stroke="#000" /></Svg></WindowButton>
          <WindowButton aria-label="Cerrar"><Svg w={11} h={11}><path d="M.5.500l10 10M10.500.500l-10 10" stroke="#000" /></Svg></WindowButton>
        </WindowButtons>
      </TitleBar>
      <MenuBar>
        <MenuList>{menus.map((m) => <li key={m}><MenuItem>{m}</MenuItem></li>)}</MenuList>
        <SearchBox>
          <SearchGlyph><Magnifier /></SearchGlyph>
          <SearchInput aria-label="Buscar" placeholder="Buscar (Ctrl+I)" />
        </SearchBox>
      </MenuBar>
      <ToolBar>
        <Grip $first />
        <ToolGroup>
          <ToolButton aria-label="Nuevo archivo"><NewFile /></ToolButton>
          <ToolButton aria-label="Nuevo proyecto"><NewProject /></ToolButton>
          <ToolButton aria-label="Abrir proyecto"><OpenProject /></ToolButton>
          <ToolButton aria-label="Guardar todo"><SaveAll /></ToolButton>
        </ToolGroup>
        <Grip />
        <ToolGroup>
          <ToolButton $w={22} aria-label="Deshacer"><Undo /></ToolButton>
          <ToolButton $w={22} aria-label="Rehacer"><Redo /></ToolButton>
        </ToolGroup>
        <Grip />
        <SelectWrap $w="140px" $h={20} $mr={8}>
          <Select aria-label="Configuración"><option>&lt;default config&gt;</option></Select>
          <Chevron />
        </SelectWrap>
        <ToolGroup $gap={4}>
          <SplitButton><ToolButton aria-label="Navegador"><Globe /></ToolButton><SplitArrow aria-label="Elegir navegador"><Caret /></SplitArrow></SplitButton>
          <ToolButton $w={28} aria-label="Construir"><Hammer /></ToolButton>
          <ToolButton $w={28} aria-label="Limpiar y construir"><Clean /></ToolButton>
          <SplitButton><ToolButton aria-label="Ejecutar proyecto"><Play /></ToolButton><SplitArrow aria-label="Opciones de ejecución"><Caret /></SplitArrow></SplitButton>
          <SplitButton><ToolButton aria-label="Depurar proyecto"><Debug /></ToolButton><SplitArrow aria-label="Opciones de depuración"><Caret /></SplitArrow></SplitButton>
          <SplitButton><ToolButton aria-label="Perfilar proyecto"><ProfileIcon /></ToolButton><SplitArrow aria-label="Opciones de perfil"><Caret /></SplitArrow></SplitButton>
        </ToolGroup>
      </ToolBar>

      <Workspace>
        <Column $w={256}>
          <Panel $white $flex="308 1 0">
            <PanelTop tabs={["Proye...", "Prestacio...", "Archivos"]} w={73} />
            <TreeView label="Proyectos" rows={project} />
          </Panel>
          <Panel $white $flex="305 1 0">
            <PanelTop tabs={["[JFrame] - Navegador"]} w={142} />
            <TreeView label="Navegador" rows={navigator} />
          </Panel>
        </Column>

        <Column>
          <Row>
            <Editor>
              <EditorTabs>
                {editorTabs.map(([t, w, plain], i) => (
                  <EditorTab key={t} $w={w} $plain={plain} $active={i === 4}>
                    {!plain && <JavaFile />}<span>{t}</span>{i < 5 && <Close />}
                  </EditorTab>
                ))}
                <TabTools>
                  <TabTool aria-label="Anterior"><Svg w={6} h={10}><path d="M6 0v10L0 5z" fill="#c4c4c4" /></Svg></TabTool>
                  <TabTool aria-label="Siguiente"><Svg w={6} h={10}><path d="M0 0v10l6-5z" fill="#4d4d4d" /></Svg></TabTool>
                  <TabTool aria-label="Lista de documentos"><Svg w={10} h={6}><path d="M0 0h10L5 6z" fill="#4d4d4d" /></Svg></TabTool>
                  <TabTool aria-label="Maximizar"><Svg w={10} h={8}><path d="M.5.500h9v7h-9zM0 1.500h10" stroke="#555" /></Svg></TabTool>
                </TabTools>
              </EditorTabs>
              <EditorBody>
                <EditorBar>
                  <ViewButton>Source</ViewButton>
                  <ViewButton $active>Design</ViewButton>
                  <ViewButton>History</ViewButton>
                  <Divider />
                  <BarButton $active $mr={2} aria-label="Modo de selección"><SelectMode /></BarButton>
                  <BarButton $mr={4} aria-label="Modo de conexión"><Connect /></BarButton>
                  <BarButton aria-label="Vista previa"><Preview /></BarButton>
                  <Divider />
                  {alignArt.map((a, i) => <BarButton key={i} aria-label={`Alinear ${i + 1}`}><Svg>{a}</Svg></BarButton>)}
                  <Divider />
                  <BarButton $mr={2} aria-label="Redimensionar horizontal"><ResizeH /></BarButton>
                  <BarButton $mr={2} aria-label="Redimensionar vertical"><ResizeV /></BarButton>
                  <BarButton $end aria-label="Dividir"><Svg w={10} h={10}><rect x=".5" y=".5" width="9" height="9" stroke="#555" /><path d="M5 1v8M1 5h8" stroke="#111" strokeWidth="1.500" /></Svg></BarButton>
                </EditorBar>
                <Hint>
                  <Bulb />
                  <HintText>Utilice el botón de Modo de conexión (en la barra de herramientas) para establecer una conexión entre componentes.</HintText>
                  <HintClose>x</HintClose>
                </Hint>
                <Canvas><Calculator /></Canvas>
              </EditorBody>
            </Editor>

            <Column $w={321}>
              <Panel>
                <PanelTop tabs={["Paleta"]} w={58} />
                <Scroller>
                  <ScrollContent>
                    <PaletteHead><Expander plus />Contenedores Swing</PaletteHead>
                    <PaletteHead><Expander />Controles Swing</PaletteHead>
                    <PaletteGrid>
                      {palette.map(([k, t]) => <PaletteItem key={t}><PIcon k={k} />{t}</PaletteItem>)}
                    </PaletteGrid>
                  </ScrollContent>
                  <Scroll thumb="56%" />
                </Scroller>
              </Panel>
              <Panel>
                <PanelTop tabs={["[JFrame] - Properties"]} w={143} />
                <PropTabs>
                  <PropTab $active>Propiedades</PropTab>
                  <PropTab>Enlace</PropTab>
                  <PropTab>Eventos</PropTab>
                  <PropTab>Codigo</PropTab>
                </PropTabs>
                <Scroller>
                  <ScrollContent>
                    <PropTable>
                      <colgroup><NameCol /><col /><MoreCol /></colgroup>
                      <tbody>
                        <Category>Propiedades</Category>
                        <Property name="defaultCloseOperation" bold flush>
                          <SelectWrap $h={17}>
                            <Select $flat aria-label="defaultCloseOperation"><option>EXIT_ON_CLOSE</option></Select>
                            <Chevron />
                          </SelectWrap>
                        </Property>
                        <Property name="title" />
                        <Category>Otras Propiedades</Category>
                        <Property name="alwaysOnTop"><Check type="checkbox" aria-label="alwaysOnTop" /></Property>
                        <Property name="alwaysOnTopSupported" more={false}><Check type="checkbox" aria-label="alwaysOnTopSupported" defaultChecked disabled /></Property>
                        <Property name="autoRequestFocus"><Check type="checkbox" aria-label="autoRequestFocus" defaultChecked /></Property>
                      </tbody>
                    </PropTable>
                  </ScrollContent>
                  <Scroll thumb="14px" />
                </Scroller>
                <Description>
                  [JFrame]
                  <HelpButton aria-label="Ayuda">
                    <Svg><circle cx="8" cy="8" r="7.500" fill="#3c6cc8" stroke="#1e3f94" /><path d="M5.500 6c0-3.500 5-3 5-.3C10.500 7.500 8 7.500 8 9.500M8 11v1.800" stroke="#fff" strokeWidth="1.800" /></Svg>
                  </HelpButton>
                </Description>
              </Panel>
            </Column>
          </Row>
          <Panel $flex="0 0 133px"><PanelTop tabs={["Salida"]} w={57} /></Panel>
        </Column>
      </Workspace>

      <StatusBar>
        <StatusCell $w={110}>1:1</StatusCell>
        <StatusCell>INS</StatusCell>
      </StatusBar>
      <TaskBar>
        <TaskGroup>
          <TaskButton $w={48} aria-label="Inicio"><WinLogo /></TaskButton>
          <TaskButton $w={48} aria-label="Buscar"><TaskSearch /></TaskButton>
          <TaskButton $w={48} aria-label="Vista de tareas"><TaskView /></TaskButton>
          <TaskButton $w={52} aria-label="Panel de control"><ControlPanel /></TaskButton>
          <TaskButton $w={49} aria-label="Camión"><Truck /></TaskButton>
          <TaskButton $w={49} $mark="many" aria-label="Explorador"><Explorer /></TaskButton>
          <TaskButton $w={49} aria-label="iTunes"><ITunes /></TaskButton>
          <TaskButton $w={49} $mark="one" aria-label="Chrome"><Chrome /></TaskButton>
          <TaskButton $w={48} $mark="one" $active aria-label="NetBeans"><Cube s={24} /></TaskButton>
        </TaskGroup>
        <TaskGroup>
          <TrayButton aria-label="Mostrar iconos ocultos"><TrayUp /></TrayButton>
          <TrayButton aria-label="Batería"><Battery /></TrayButton>
          <TrayButton aria-label="Volumen"><Volume /></TrayButton>
          <TrayButton aria-label="Pantalla"><Monitor /></TrayButton>
          <TrayButton aria-label="Estado"><Ring /></TrayButton>
          <TrayButton aria-label="Red"><Wifi /></TrayButton>
          <TrayText $w={34}>ESP<br />ES</TrayText>
          <TrayText $w={74}>11:26 a. m.<br />04/04/2017</TrayText>
          <TrayButton $w={36} aria-label="Notificaciones"><Notice /></TrayButton>
          <ShowDesktop />
        </TaskGroup>
      </TaskBar>
    </Page>
  );
}
